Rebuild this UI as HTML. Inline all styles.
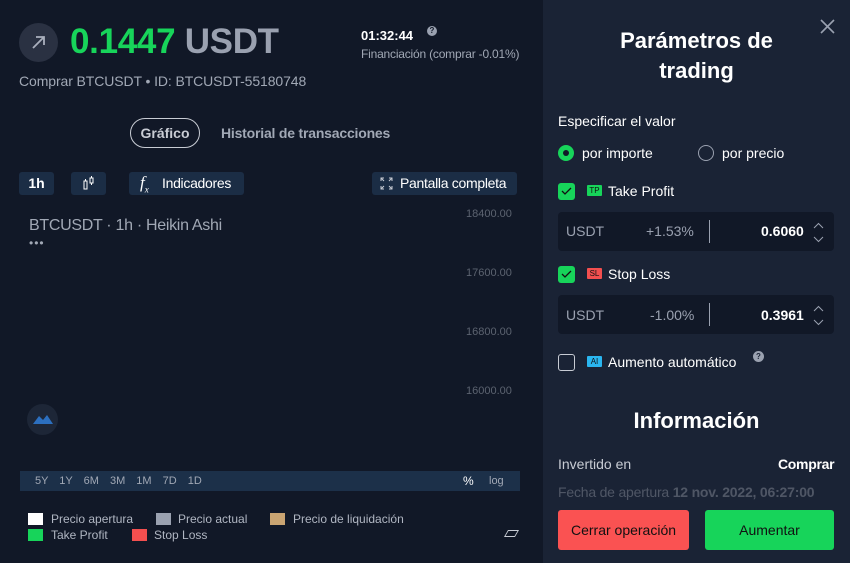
<!DOCTYPE html>
<html><head><meta charset="utf-8"><style>
*{margin:0;padding:0;box-sizing:border-box}
body{width:850px;height:563px;overflow:hidden;background:#111827;font-family:"Liberation Sans",sans-serif;position:relative;color:#fff}
.a{position:absolute;white-space:nowrap}
.btn{position:absolute;background:#1b2d45;border-radius:3px;height:23px;font-size:14px;line-height:23px;color:#fff}
.rp{position:absolute;left:543px;top:0;width:307px;height:563px;background:#1a2335}
.box{position:absolute;left:558px;width:276px;height:39px;background:#111827;border-radius:4px}
.cb{position:absolute;width:17px;height:17px;border-radius:3px;background:#17d45a}
.tag{position:absolute;width:15px;height:11px;font-size:8px;line-height:11px;text-align:center;color:#111;border-radius:1px}
.sq{position:absolute;width:15px;height:12px}
.lg{position:absolute;font-size:12px;color:#b0b6c2}
</style></head><body>
<div class="a" style="left:19px;top:23px;width:39px;height:39px;border-radius:50%;background:#2a3142"></div>
<svg class="a" style="left:29px;top:33px" width="19" height="19" viewBox="0 0 19 19"><path d="M4 15L15 4M7 4H15V12" stroke="#aab0bd" stroke-width="1.8" fill="none"/></svg>
<div class="a" style="left:70px;top:22px;font-size:35px;font-weight:bold;color:#17d45a;letter-spacing:-0.3px">0.1447 <span style="color:#9aa1b0">USDT</span></div>
<div class="a" style="left:19px;top:73px;font-size:14px;color:#a1a8b5;letter-spacing:-0.1px">Comprar BTCUSDT • ID: BTCUSDT-55180748</div>
<div class="a" style="left:361px;top:28px;font-size:13px;font-weight:bold">01:32:44</div>
<div class="a" style="left:427px;top:26px;width:10px;height:10px;border-radius:50%;background:#9aa1b0;font-size:8px;color:#111827;text-align:center;line-height:10px;font-weight:bold">?</div>
<div class="a" style="left:361px;top:47px;font-size:12px;color:#a1a8b5;letter-spacing:-0.2px">Financiación (comprar -0.01%)</div>
<div class="a" style="left:130px;top:118px;width:70px;height:30px;border:1px solid #c8ccd4;border-radius:15px;font-size:14px;font-weight:bold;color:#c8ccd4;text-align:center;line-height:28px">Gráfico</div>
<div class="a" style="left:221px;top:125px;font-size:14px;font-weight:bold;color:#a1a8b5;letter-spacing:-0.2px">Historial de transacciones</div>
<div class="btn" style="left:19px;top:172px;width:35px;text-align:center;font-weight:bold">1h</div>
<div class="btn" style="left:71px;top:172px;width:35px"><svg style="position:absolute;left:12px;top:4px" width="12" height="15"><rect x="1" y="5" width="3" height="8" fill="none" stroke="#fff"/><rect x="7" y="2" width="3" height="5" fill="none" stroke="#fff"/><path d="M2.5 3V5M8.5 0V2M8.5 7V9" stroke="#fff"/></svg></div>
<div class="btn" style="left:129px;top:172px;width:115px"><span style="position:absolute;left:11px;font-style:italic;font-family:'Liberation Serif',serif;font-size:17px;top:-1px">f<sub style="font-size:9px">x</sub></span><span style="position:absolute;left:33px;letter-spacing:-0.3px">Indicadores</span></div>
<div class="btn" style="left:372px;top:172px;width:145px"><svg style="position:absolute;left:8px;top:5px" width="13" height="13"><path d="M1 4V1H4M9 1H12V4M12 9V12H9M4 12H1V9M1 1L4 4M12 1L9 4M12 12L9 9M1 12L4 9" stroke="#c8ccd4" fill="none"/></svg><span style="position:absolute;left:28px;letter-spacing:-0.3px">Pantalla completa</span></div>
<div class="a" style="left:29px;top:217px;font-size:16px;color:#a1a8b5;letter-spacing:-0.3px">BTCUSDT · 1h · Heikin Ashi</div>
<div class="a" style="left:29px;top:236px;font-size:12px;color:#a1a8b5;letter-spacing:1px">•••</div>
<div class="a" style="left:466px;top:208px;font-size:11px;color:#5c6370">18400.00</div>
<div class="a" style="left:466px;top:267px;font-size:11px;color:#5c6370">17600.00</div>
<div class="a" style="left:466px;top:326px;font-size:11px;color:#5c6370">16800.00</div>
<div class="a" style="left:466px;top:385px;font-size:11px;color:#5c6370">16000.00</div>
<div class="a" style="left:27px;top:404px;width:31px;height:31px;border-radius:50%;background:#1d2637"></div>
<svg class="a" style="left:32px;top:412px" width="22" height="14"><path d="M1 12L7 4L11 8L15 3L21 12Z" fill="#2c6fbf"/></svg>
<div class="a" style="left:20px;top:471px;width:500px;height:20px;background:#1c3049"></div>
<div class="a" style="left:35px;top:475px;font-size:11px;color:#a1a8b5;word-spacing:8px">5Y 1Y 6M 3M 1M 7D 1D</div>
<div class="a" style="left:463px;top:474px;font-size:12px;color:#fff">%</div>
<div class="a" style="left:489px;top:475px;font-size:11px;color:#a1a8b5">log</div>
<div class="sq" style="left:28px;top:513px;background:#fff"></div><div class="lg" style="left:51px;top:512px">Precio apertura</div>
<div class="sq" style="left:156px;top:513px;background:#9aa1b0"></div><div class="lg" style="left:178px;top:512px">Precio actual</div>
<div class="sq" style="left:270px;top:513px;background:#c9a472"></div><div class="lg" style="left:293px;top:512px">Precio de liquidación</div>
<div class="sq" style="left:28px;top:529px;background:#17d45a"></div><div class="lg" style="left:51px;top:528px">Take Profit</div>
<div class="sq" style="left:132px;top:529px;background:#f34f4f"></div><div class="lg" style="left:154px;top:528px">Stop Loss</div>
<div class="a" style="left:506px;top:530px;width:11px;height:7px;border:1px solid #c8ccd4;transform:skewX(-30deg)"></div>

<div class="rp"></div>
<div class="a" style="left:543px;top:26px;width:307px;text-align:center;font-size:22px;font-weight:bold;line-height:30px">Parámetros de<br>trading</div>
<svg class="a" style="left:820px;top:19px" width="15" height="15"><path d="M1 1L14 14M14 1L1 14" stroke="#9aa1b0" stroke-width="1.6"/></svg>
<div class="a" style="left:558px;top:113px;font-size:14px">Especificar el valor</div>
<div class="a" style="left:558px;top:145px;width:16px;height:16px;border-radius:50%;background:#17d45a"></div>
<div class="a" style="left:563px;top:150px;width:6px;height:6px;border-radius:50%;background:#111827"></div>
<div class="a" style="left:582px;top:145px;font-size:14px">por importe</div>
<div class="a" style="left:698px;top:145px;width:16px;height:16px;border-radius:50%;border:1px solid #9aa1b0"></div>
<div class="a" style="left:722px;top:145px;font-size:14px">por precio</div>
<div class="cb" style="left:558px;top:183px"></div>
<svg class="a" style="left:561px;top:187px" width="11" height="9"><path d="M1 4L4 7L10 1" stroke="#111" stroke-width="1.3" fill="none"/></svg>
<div class="tag" style="left:587px;top:185px;background:#17d45a">TP</div>
<div class="a" style="left:608px;top:183px;font-size:14px">Take Profit</div>
<div class="box" style="top:212px"></div>
<div class="a" style="left:566px;top:223px;font-size:14px;color:#9aa1b0">USDT</div>
<div class="a" style="left:646px;top:223px;font-size:14px;color:#9aa1b0">+1.53%</div>
<div class="a" style="left:709px;top:220px;width:1px;height:23px;background:#9aa1b0"></div>
<div class="a" style="left:761px;top:223px;font-size:14px;font-weight:bold">0.6060</div>
<svg class="a" style="left:813px;top:222px" width="11" height="22"><path d="M1 6L5.5 1.5L10 6M1 15L5.5 19.5L10 15" stroke="#9aa1b0" fill="none"/></svg>
<div class="cb" style="left:558px;top:266px"></div>
<svg class="a" style="left:561px;top:270px" width="11" height="9"><path d="M1 4L4 7L10 1" stroke="#111" stroke-width="1.3" fill="none"/></svg>
<div class="tag" style="left:587px;top:268px;background:#f34f4f">SL</div>
<div class="a" style="left:608px;top:266px;font-size:14px">Stop Loss</div>
<div class="box" style="top:295px"></div>
<div class="a" style="left:566px;top:307px;font-size:14px;color:#9aa1b0">USDT</div>
<div class="a" style="left:650px;top:307px;font-size:14px;color:#9aa1b0">-1.00%</div>
<div class="a" style="left:709px;top:303px;width:1px;height:23px;background:#9aa1b0"></div>
<div class="a" style="left:761px;top:307px;font-size:14px;font-weight:bold">0.3961</div>
<svg class="a" style="left:813px;top:305px" width="11" height="22"><path d="M1 6L5.5 1.5L10 6M1 15L5.5 19.5L10 15" stroke="#9aa1b0" fill="none"/></svg>
<div class="a" style="left:558px;top:354px;width:17px;height:17px;border-radius:3px;border:1px solid #c8ccd4"></div>
<div class="tag" style="left:587px;top:356px;background:#2ab6f0">AI</div>
<div class="a" style="left:608px;top:354px;font-size:14px">Aumento automático</div>
<div class="a" style="left:753px;top:351px;width:11px;height:11px;border-radius:50%;background:#9aa1b0;font-size:8px;color:#1a2335;text-align:center;line-height:11px;font-weight:bold">?</div>
<div class="a" style="left:543px;top:408px;width:307px;text-align:center;font-size:22px;font-weight:bold">Información</div>
<div class="a" style="left:558px;top:456px;font-size:14px;color:#c8ccd4">Invertido en</div>
<div class="a" style="left:778px;top:456px;font-size:14px;font-weight:bold;letter-spacing:-0.3px">Comprar</div>
<div class="a" style="left:558px;top:484px;font-size:14px;color:#c8ccd4;opacity:.3;letter-spacing:-0.2px">Fecha de apertura <b>12 nov. 2022, 06:27:00</b></div>
<div class="a" style="left:558px;top:510px;width:131px;height:40px;background:#fa5252;border-radius:3px;color:#111;font-size:14px;text-align:center;line-height:40px">Cerrar operación</div>
<div class="a" style="left:705px;top:510px;width:129px;height:40px;background:#17d45a;border-radius:3px;color:#111;font-size:14px;text-align:center;line-height:40px">Aumentar</div>
</body></html>
